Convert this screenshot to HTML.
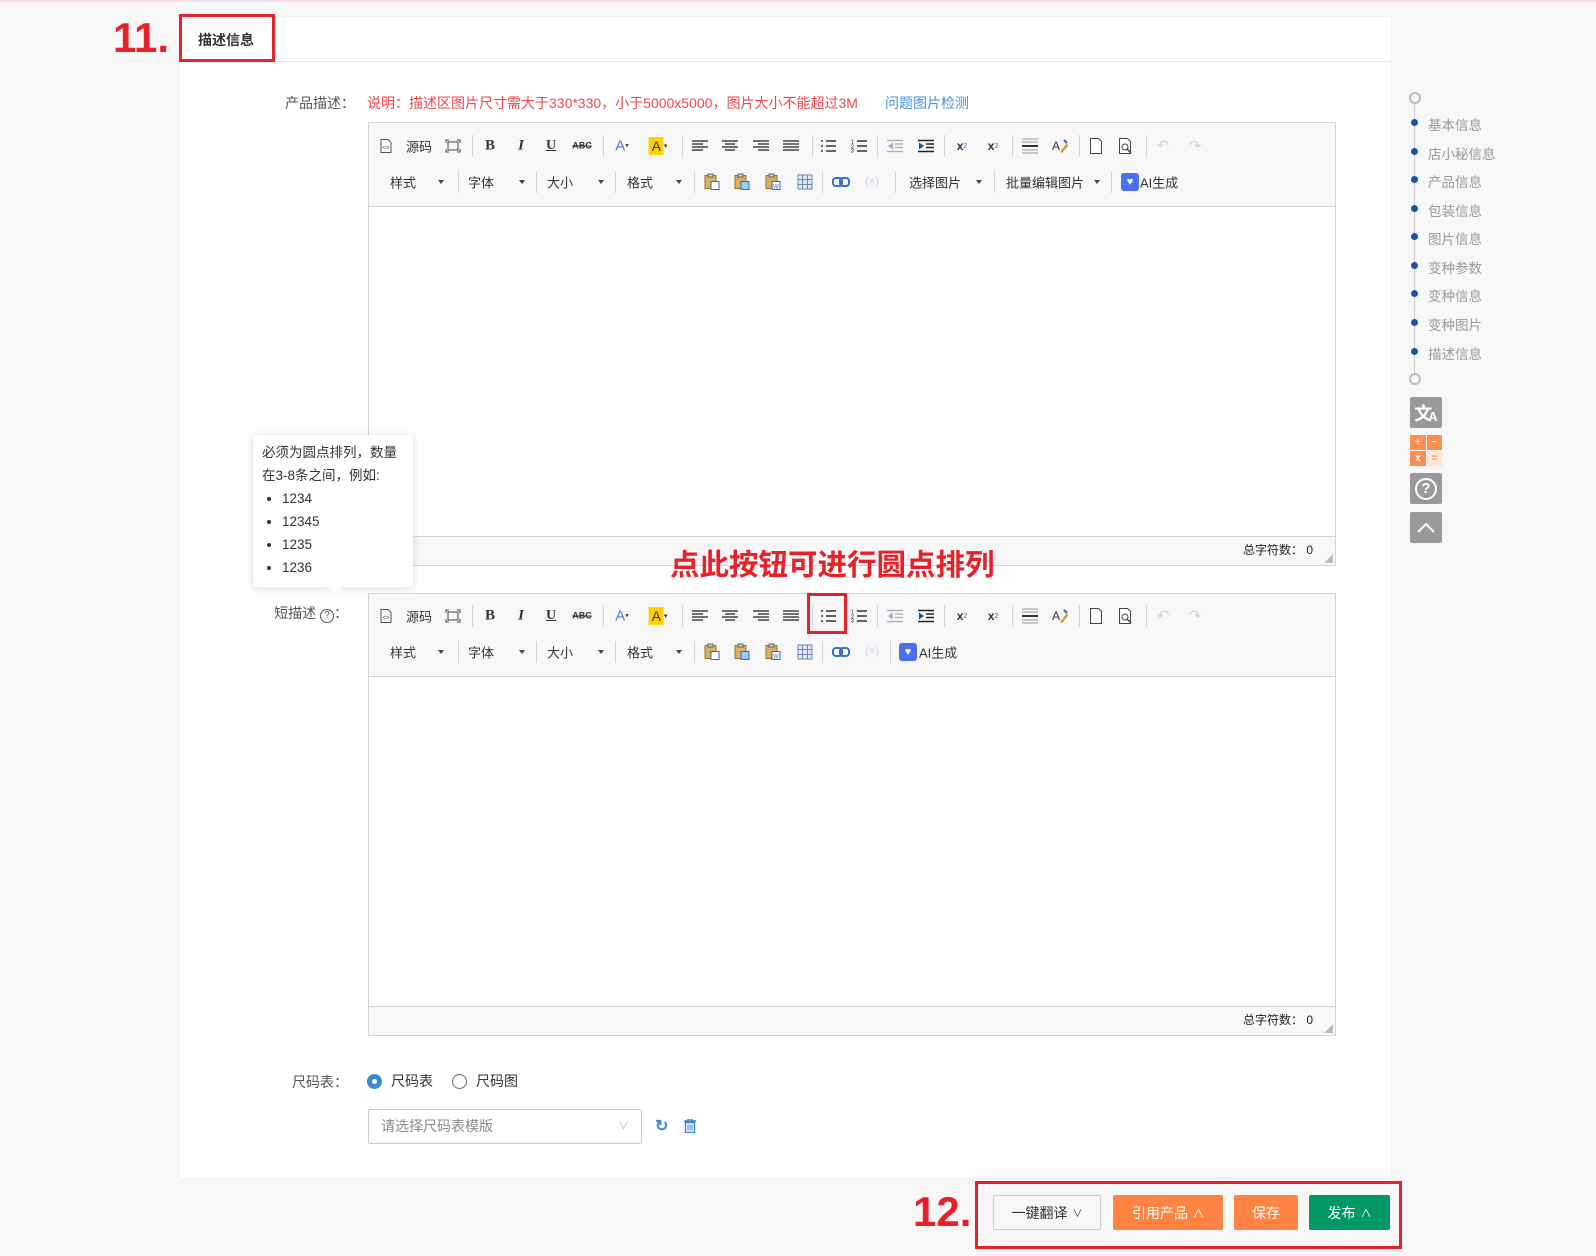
<!DOCTYPE html>
<html><head><meta charset="utf-8">
<style>
*{margin:0;padding:0;box-sizing:border-box}
body{width:1596px;height:1256px;background:#f7f7f7;font-family:"Liberation Sans","Noto Sans CJK SC",sans-serif;position:relative;overflow:hidden;color:#333;font-size:13px}
.a{position:absolute}
.topline{left:0;top:0;width:1596px;height:2px;background:#f3dce6}
.card{left:180px;top:17px;width:1211px;height:1161px;background:#fff;box-shadow:0 0 2px rgba(0,0,0,.05)}
.hdr{left:180px;top:61px;width:1211px;height:1px;background:#e6e6e6}
.redbox{border:3px solid #e8202a}
.big{color:#e8202a;font-weight:bold;font-family:"Liberation Sans",sans-serif}
.lbl{font-size:14px;color:#555;text-align:right;width:120px}
.ed{background:#fff;border:1px solid #d4d4d4}
.tb{left:0;top:0;right:0;background:#f7f7f7;border-bottom:1px solid #d4d4d4}
.ft{left:0;bottom:0;right:0;height:28px;background:#f7f7f7;border-top:1px solid #d4d4d4;font-size:12px;color:#222;text-align:right;padding-right:22px;line-height:27px}
.ft:after{content:"";position:absolute;right:2px;bottom:2px;border-left:9px solid transparent;border-bottom:9px solid #bbb}
.i{position:absolute;transform:translate(-50%,-50%);display:flex;align-items:center;justify-content:center;line-height:1}
.sep{position:absolute;width:1px;height:22px;background:#d0d0d0;transform:translateY(-50%)}
.t{position:absolute;transform:translateY(-50%);font-size:13px;color:#333;white-space:nowrap}
.car{position:absolute;transform:translate(-50%,-50%);width:0;height:0;border-left:3px solid transparent;border-right:3px solid transparent;border-top:4px solid #444}
.nav{left:1428px;font-size:13.5px;color:#999}
.dot{left:1411px;width:7px;height:7px;border-radius:50%;background:#1a56a0}
.sq{left:1410px;width:32px;height:31px;background:#999;border-radius:2px;display:flex;align-items:center;justify-content:center}
.btn{height:35px;border-radius:2px;font-size:14px;display:flex;align-items:center;justify-content:center;color:#fff}
</style></head><body>
<div class="a topline"></div>
<div class="a card"></div>
<div class="a hdr"></div>
<div class="a big" style="left:113px;top:14px;font-size:42px;line-height:48px">11.</div>
<div class="a redbox" style="left:179px;top:14px;width:96px;height:48px;background:#fff"></div>
<div class="a" style="left:198px;top:30px;font-size:14px;font-weight:bold;color:#333">描述信息</div>

<div class="a lbl" style="left:235px;top:93px">产品描述：</div>
<div class="a" style="left:367px;top:93px;font-size:14px;color:#f0464d">说明：描述区图片尺寸需大于330*330，小于5000x5000，图片大小不能超过3M</div>
<div class="a" style="left:885px;top:93px;font-size:14px;color:#4a8fd8">问题图片检测</div>

<!-- editor 1 -->
<div class="a ed" style="left:368px;top:122px;width:968px;height:444px">
 <div class="a tb" style="height:84px">
  <div class="i" style="left:17px;top:23px"><svg width="12" height="15"><path d="M1 1h7l3 3v10H1z" fill="none" stroke="#555"/><text x="2.5" y="11" font-size="6" fill="#555">&lt;&gt;</text></svg></div>
  <div class="t" style="left:37px;top:23px">源码</div>
  <div class="i" style="left:84px;top:23px"><svg width="16" height="14"><path d="M1 4V1h3M12 1h3v3M15 10v3h-3M4 13H1v-3M3 3h10v8H3z" fill="none" stroke="#444"/></svg></div>
  <div class="sep" style="left:103px;top:23px"></div>
  <div class="i" style="left:121px;top:23px;font-weight:bold;font-family:'Liberation Serif';font-size:15px">B</div>
  <div class="i" style="left:152px;top:23px;font-weight:bold;font-style:italic;font-family:'Liberation Serif';font-size:15px">I</div>
  <div class="i" style="left:182px;top:23px;font-weight:bold;text-decoration:underline;font-family:'Liberation Serif';font-size:14px">U</div>
  <div class="i" style="left:213px;top:23px;font-weight:bold;font-size:9px;text-decoration:line-through">ABC</div>
  <div class="sep" style="left:234px;top:23px"></div>
  <div class="i" style="left:253px;top:23px;color:#4a7de0;font-size:15px">A<span style="font-size:7px;color:#444">▾</span></div>
  <div class="i" style="left:289px;top:23px"><span style="background:#ffd000;padding:2px 3px;font-size:14px">A</span><span style="font-size:7px">▾</span></div>
  <div class="sep" style="left:313px;top:23px"></div>
  <div class="i" style="left:331px;top:23px"><svg width="16" height="12"><path d="M0 1h16M0 4h11M0 7h16M0 10h11" stroke="#444" stroke-width="1.5"/></svg></div>
  <div class="i" style="left:361px;top:23px"><svg width="16" height="12"><path d="M0 1h16M3 4h10M0 7h16M3 10h10" stroke="#444" stroke-width="1.5"/></svg></div>
  <div class="i" style="left:392px;top:23px"><svg width="16" height="12"><path d="M0 1h16M5 4h11M0 7h16M5 10h11" stroke="#444" stroke-width="1.5"/></svg></div>
  <div class="i" style="left:422px;top:23px"><svg width="16" height="12"><path d="M0 1h16M0 4h16M0 7h16M0 10h16" stroke="#444" stroke-width="1.5"/></svg></div>
  <div class="sep" style="left:443px;top:23px"></div>
  <div class="i" style="left:459px;top:23px"><svg width="16" height="13"><path d="M1 1.5h2M1 6.5h2M1 11.5h2M6 1.5h10M6 6.5h10M6 11.5h10" stroke="#333" stroke-width="1.5"/></svg></div>
  <div class="i" style="left:490px;top:23px"><svg width="16" height="13"><text x="0" y="4" font-size="5">1</text><text x="0" y="9" font-size="5">2</text><text x="0" y="13" font-size="5">3</text><path d="M6 1.5h10M6 6.5h10M6 11.5h10" stroke="#333" stroke-width="1.5"/></svg></div>
  <div class="sep" style="left:508px;top:23px"></div>
  <div class="i" style="left:526px;top:23px"><svg width="16" height="13"><path d="M0 1h16M8 4.5h8M8 8h8M0 12h16" stroke="#aaa" stroke-width="1.3"/><path d="M6 3v7L1 6.5z" fill="#aac"/></svg></div>
  <div class="i" style="left:557px;top:23px"><svg width="16" height="13"><path d="M0 1h16M8 4.5h8M8 8h8M0 12h16" stroke="#222" stroke-width="1.5"/><path d="M1 3v7l5-3.5z" fill="#1a4f9a"/></svg></div>
  <div class="sep" style="left:575px;top:23px"></div>
  <div class="i" style="left:593px;top:23px;font-weight:bold;font-size:12px">x<sub style="font-size:7px;color:#36c;font-weight:normal">2</sub></div>
  <div class="i" style="left:624px;top:23px;font-weight:bold;font-size:12px">x<sup style="font-size:7px;color:#36c;font-weight:normal">2</sup></div>
  <div class="sep" style="left:643px;top:23px"></div>
  <div class="i" style="left:661px;top:23px"><svg width="16" height="16"><path d="M0 1h16M0 4h16M0 12h16M0 15h16" stroke="#999"/><path d="M0 8h16" stroke="#333" stroke-width="2"/></svg></div>
  <div class="i" style="left:691px;top:23px"><svg width="16" height="16"><text x="0" y="12" font-size="12" fill="#333">A</text><path d="M8 14l7-9 1 3-6 7z" fill="#c9a030"/><path d="M12 2l3 3" stroke="#36c" stroke-width="2"/></svg></div>
  <div class="sep" style="left:710px;top:23px"></div>
  <div class="i" style="left:727px;top:23px"><svg width="12" height="16"><path d="M.5 .5h8l3 3v12H.5z" fill="#fff" stroke="#444"/></svg></div>
  <div class="i" style="left:757px;top:23px"><svg width="14" height="16"><path d="M.5 .5h8l3 3v12H.5z" fill="#fff" stroke="#444"/><circle cx="6" cy="9" r="3" fill="none" stroke="#444"/><path d="M8 11l4 4" stroke="#444" stroke-width="1.5"/></svg></div>
  <div class="sep" style="left:777px;top:23px"></div>
  <div class="i" style="left:794px;top:23px;color:#c7d5e8;font-size:15px">↶</div>
  <div class="i" style="left:826px;top:23px;color:#c7d5e8;font-size:15px">↷</div>

  <div class="t" style="left:21px;top:59px">样式</div><div class="car" style="left:72px;top:59px"></div>
  <div class="sep" style="left:89px;top:59px"></div>
  <div class="t" style="left:99px;top:59px">字体</div><div class="car" style="left:153px;top:59px"></div>
  <div class="sep" style="left:167px;top:59px"></div>
  <div class="t" style="left:178px;top:59px">大小</div><div class="car" style="left:232px;top:59px"></div>
  <div class="sep" style="left:246px;top:59px"></div>
  <div class="t" style="left:258px;top:59px">格式</div><div class="car" style="left:310px;top:59px"></div>
  <div class="sep" style="left:325px;top:59px"></div>
  <div class="i" style="left:343px;top:59px"><svg width="16" height="17"><rect x="1" y="2" width="11" height="13" fill="#d8b060" stroke="#987030"/><rect x="4" y="0.5" width="5" height="3" fill="#ccc" stroke="#666"/><rect x="7" y="8" width="8" height="8" fill="#fff" stroke="#36c"/></svg></div>
  <div class="i" style="left:373px;top:59px"><svg width="16" height="17"><rect x="1" y="2" width="11" height="13" fill="#d8b060" stroke="#987030"/><rect x="4" y="0.5" width="5" height="3" fill="#ccc" stroke="#666"/><rect x="7" y="8" width="8" height="8" fill="#9cf" stroke="#36c"/></svg></div>
  <div class="i" style="left:404px;top:59px"><svg width="16" height="17"><rect x="1" y="2" width="11" height="13" fill="#d8b060" stroke="#987030"/><rect x="4" y="0.5" width="5" height="3" fill="#ccc" stroke="#666"/><rect x="7" y="8" width="8" height="8" fill="#fff" stroke="#36c"/><text x="8" y="15" font-size="6" fill="#36c">W</text></svg></div>
  <div class="i" style="left:436px;top:59px"><svg width="15" height="15"><rect x=".5" y=".5" width="14" height="14" fill="#dde8f8" stroke="#6b86b0"/><path d="M0 5h15M0 10h15M5 0v15M10 0v15" stroke="#6b86b0"/></svg></div>
  <div class="sep" style="left:453px;top:59px"></div>
  <div class="i" style="left:472px;top:59px"><svg width="18" height="10"><rect x="1" y="1" width="9" height="8" rx="3" fill="none" stroke="#3a6fc8" stroke-width="2"/><rect x="8" y="1" width="9" height="8" rx="3" fill="none" stroke="#3a6fc8" stroke-width="2"/></svg></div>
  <div class="i" style="left:503px;top:59px;color:#c8d4e8;font-size:11px">(×)</div>
  <div class="sep" style="left:526px;top:59px"></div>
  <div class="t" style="left:540px;top:59px">选择图片</div><div class="car" style="left:610px;top:59px"></div>
  <div class="sep" style="left:625px;top:59px"></div>
  <div class="t" style="left:637px;top:59px">批量编辑图片</div><div class="car" style="left:728px;top:59px"></div>
  <div class="sep" style="left:742px;top:59px"></div>
  <div class="i" style="left:761px;top:59px;width:18px;height:18px;background:#4a6ff0;border-radius:3px;color:#fff;font-size:11px">♥</div>
  <div class="t" style="left:771px;top:59px">AI生成</div>
 </div>
 <div class="a ft" style="height:29px">总字符数： 0</div>
</div>

<div class="a big" style="left:670px;top:545px;font-size:29.5px;font-family:'Noto Sans CJK SC',sans-serif;line-height:36px">点此按钮可进行圆点排列</div>

<!-- tooltip -->
<div class="a" style="left:253px;top:435px;width:160px;height:152px;background:#fff;border-radius:3px;box-shadow:0 1px 8px rgba(0,0,0,.15);font-size:13.5px;color:#333;padding:6px 9px;line-height:23px">
必须为圆点排列，数量在3-8条之间，例如:
<ul style="padding-left:20px"><li>1234</li><li>12345</li><li>1235</li><li>1236</li></ul>
</div>
<div class="a" style="left:327px;top:587px;width:0;height:0;border-left:7px solid transparent;border-right:7px solid transparent;border-top:7px solid #fff"></div>

<div class="a lbl" style="left:228px;top:603px">短描述 <span style="display:inline-block;width:14px;height:14px;border:1px solid #555;border-radius:50%;font-size:10px;line-height:12px;text-align:center">?</span>：</div>

<!-- editor 2 -->
<div class="a ed" style="left:368px;top:593px;width:968px;height:443px">
 <div class="a tb" style="height:83px">
  <div class="i" style="left:17px;top:22px"><svg width="12" height="15"><path d="M1 1h7l3 3v10H1z" fill="none" stroke="#555"/><text x="2.5" y="11" font-size="6" fill="#555">&lt;&gt;</text></svg></div>
  <div class="t" style="left:37px;top:22px">源码</div>
  <div class="i" style="left:84px;top:22px"><svg width="16" height="14"><path d="M1 4V1h3M12 1h3v3M15 10v3h-3M4 13H1v-3M3 3h10v8H3z" fill="none" stroke="#444"/></svg></div>
  <div class="sep" style="left:103px;top:22px"></div>
  <div class="i" style="left:121px;top:22px;font-weight:bold;font-family:'Liberation Serif';font-size:15px">B</div>
  <div class="i" style="left:152px;top:22px;font-weight:bold;font-style:italic;font-family:'Liberation Serif';font-size:15px">I</div>
  <div class="i" style="left:182px;top:22px;font-weight:bold;text-decoration:underline;font-family:'Liberation Serif';font-size:14px">U</div>
  <div class="i" style="left:213px;top:22px;font-weight:bold;font-size:9px;text-decoration:line-through">ABC</div>
  <div class="sep" style="left:234px;top:22px"></div>
  <div class="i" style="left:253px;top:22px;color:#4a7de0;font-size:15px">A<span style="font-size:7px;color:#444">▾</span></div>
  <div class="i" style="left:289px;top:22px"><span style="background:#ffd000;padding:2px 3px;font-size:14px">A</span><span style="font-size:7px">▾</span></div>
  <div class="sep" style="left:313px;top:22px"></div>
  <div class="i" style="left:331px;top:22px"><svg width="16" height="12"><path d="M0 1h16M0 4h11M0 7h16M0 10h11" stroke="#444" stroke-width="1.5"/></svg></div>
  <div class="i" style="left:361px;top:22px"><svg width="16" height="12"><path d="M0 1h16M3 4h10M0 7h16M3 10h10" stroke="#444" stroke-width="1.5"/></svg></div>
  <div class="i" style="left:392px;top:22px"><svg width="16" height="12"><path d="M0 1h16M5 4h11M0 7h16M5 10h11" stroke="#444" stroke-width="1.5"/></svg></div>
  <div class="i" style="left:422px;top:22px"><svg width="16" height="12"><path d="M0 1h16M0 4h16M0 7h16M0 10h16" stroke="#444" stroke-width="1.5"/></svg></div>
  <div class="sep" style="left:443px;top:22px"></div>
  <div class="i" style="left:459px;top:22px"><svg width="16" height="13"><path d="M1 1.5h2M1 6.5h2M1 11.5h2M6 1.5h10M6 6.5h10M6 11.5h10" stroke="#333" stroke-width="1.5"/></svg></div>
  <div class="i" style="left:490px;top:22px"><svg width="16" height="13"><text x="0" y="4" font-size="5">1</text><text x="0" y="9" font-size="5">2</text><text x="0" y="13" font-size="5">3</text><path d="M6 1.5h10M6 6.5h10M6 11.5h10" stroke="#333" stroke-width="1.5"/></svg></div>
  <div class="sep" style="left:508px;top:22px"></div>
  <div class="i" style="left:526px;top:22px"><svg width="16" height="13"><path d="M0 1h16M8 4.5h8M8 8h8M0 12h16" stroke="#aaa" stroke-width="1.3"/><path d="M6 3v7L1 6.5z" fill="#aac"/></svg></div>
  <div class="i" style="left:557px;top:22px"><svg width="16" height="13"><path d="M0 1h16M8 4.5h8M8 8h8M0 12h16" stroke="#222" stroke-width="1.5"/><path d="M1 3v7l5-3.5z" fill="#1a4f9a"/></svg></div>
  <div class="sep" style="left:575px;top:22px"></div>
  <div class="i" style="left:593px;top:22px;font-weight:bold;font-size:12px">x<sub style="font-size:7px;color:#36c;font-weight:normal">2</sub></div>
  <div class="i" style="left:624px;top:22px;font-weight:bold;font-size:12px">x<sup style="font-size:7px;color:#36c;font-weight:normal">2</sup></div>
  <div class="sep" style="left:643px;top:22px"></div>
  <div class="i" style="left:661px;top:22px"><svg width="16" height="16"><path d="M0 1h16M0 4h16M0 12h16M0 15h16" stroke="#999"/><path d="M0 8h16" stroke="#333" stroke-width="2"/></svg></div>
  <div class="i" style="left:691px;top:22px"><svg width="16" height="16"><text x="0" y="12" font-size="12" fill="#333">A</text><path d="M8 14l7-9 1 3-6 7z" fill="#c9a030"/><path d="M12 2l3 3" stroke="#36c" stroke-width="2"/></svg></div>
  <div class="sep" style="left:710px;top:22px"></div>
  <div class="i" style="left:727px;top:22px"><svg width="12" height="16"><path d="M.5 .5h8l3 3v12H.5z" fill="#fff" stroke="#444"/></svg></div>
  <div class="i" style="left:757px;top:22px"><svg width="14" height="16"><path d="M.5 .5h8l3 3v12H.5z" fill="#fff" stroke="#444"/><circle cx="6" cy="9" r="3" fill="none" stroke="#444"/><path d="M8 11l4 4" stroke="#444" stroke-width="1.5"/></svg></div>
  <div class="sep" style="left:777px;top:22px"></div>
  <div class="i" style="left:794px;top:22px;color:#c7d5e8;font-size:15px">↶</div>
  <div class="i" style="left:826px;top:22px;color:#c7d5e8;font-size:15px">↷</div>

  <div class="t" style="left:21px;top:58px">样式</div><div class="car" style="left:72px;top:58px"></div>
  <div class="sep" style="left:89px;top:58px"></div>
  <div class="t" style="left:99px;top:58px">字体</div><div class="car" style="left:153px;top:58px"></div>
  <div class="sep" style="left:167px;top:58px"></div>
  <div class="t" style="left:178px;top:58px">大小</div><div class="car" style="left:232px;top:58px"></div>
  <div class="sep" style="left:246px;top:58px"></div>
  <div class="t" style="left:258px;top:58px">格式</div><div class="car" style="left:310px;top:58px"></div>
  <div class="sep" style="left:325px;top:58px"></div>
  <div class="i" style="left:343px;top:58px"><svg width="16" height="17"><rect x="1" y="2" width="11" height="13" fill="#d8b060" stroke="#987030"/><rect x="4" y="0.5" width="5" height="3" fill="#ccc" stroke="#666"/><rect x="7" y="8" width="8" height="8" fill="#fff" stroke="#36c"/></svg></div>
  <div class="i" style="left:373px;top:58px"><svg width="16" height="17"><rect x="1" y="2" width="11" height="13" fill="#d8b060" stroke="#987030"/><rect x="4" y="0.5" width="5" height="3" fill="#ccc" stroke="#666"/><rect x="7" y="8" width="8" height="8" fill="#9cf" stroke="#36c"/></svg></div>
  <div class="i" style="left:404px;top:58px"><svg width="16" height="17"><rect x="1" y="2" width="11" height="13" fill="#d8b060" stroke="#987030"/><rect x="4" y="0.5" width="5" height="3" fill="#ccc" stroke="#666"/><rect x="7" y="8" width="8" height="8" fill="#fff" stroke="#36c"/><text x="8" y="15" font-size="6" fill="#36c">W</text></svg></div>
  <div class="i" style="left:436px;top:58px"><svg width="15" height="15"><rect x=".5" y=".5" width="14" height="14" fill="#dde8f8" stroke="#6b86b0"/><path d="M0 5h15M0 10h15M5 0v15M10 0v15" stroke="#6b86b0"/></svg></div>
  <div class="sep" style="left:453px;top:58px"></div>
  <div class="i" style="left:472px;top:58px"><svg width="18" height="10"><rect x="1" y="1" width="9" height="8" rx="3" fill="none" stroke="#3a6fc8" stroke-width="2"/><rect x="8" y="1" width="9" height="8" rx="3" fill="none" stroke="#3a6fc8" stroke-width="2"/></svg></div>
  <div class="i" style="left:503px;top:58px;color:#c8d4e8;font-size:11px">(×)</div>
  <div class="sep" style="left:521px;top:58px"></div>
  <div class="i" style="left:539px;top:58px;width:18px;height:18px;background:#4a6ff0;border-radius:3px;color:#fff;font-size:11px">♥</div>
  <div class="t" style="left:550px;top:58px">AI生成</div>
 </div>
 <div class="a ft" style="height:29px">总字符数： 0</div>
</div>
<div class="a redbox" style="left:807px;top:593px;width:40px;height:41px"></div>

<!-- size chart -->
<div class="a lbl" style="left:228px;top:1072px">尺码表：</div>
<div class="a" style="left:367px;top:1074px;width:15px;height:15px;border-radius:50%;background:#3a87d6;display:flex;align-items:center;justify-content:center"><div style="width:5px;height:5px;border-radius:50%;background:#fff"></div></div>
<div class="a" style="left:391px;top:1071px;font-size:14px">尺码表</div>
<div class="a" style="left:452px;top:1074px;width:15px;height:15px;border-radius:50%;border:1px solid #666;background:#fff"></div>
<div class="a" style="left:476px;top:1071px;font-size:14px">尺码图</div>
<div class="a" style="left:368px;top:1109px;width:274px;height:35px;border:1px solid #ccc;border-radius:2px;background:#fff;font-size:14px;color:#888;padding-left:12px;line-height:33px">请选择尺码表模版<span style="position:absolute;right:12px;color:#bbb;font-size:11px">∨</span></div>
<div class="a" style="left:655px;top:1116px;color:#3a87d6;font-size:16px;font-weight:bold">↻</div>
<svg class="a" style="left:684px;top:1119px" width="12" height="14"><path d="M0 2h12M4 2V0h4v2M1.5 3.5h9V13.5h-9z" fill="none" stroke="#3a87d6" stroke-width="1.4"/><path d="M4 5.5v6M6 5.5v6M8 5.5v6" stroke="#3a87d6"/></svg>

<!-- right nav -->
<div class="a" style="left:1414px;top:98px;width:1px;height:280px;background:#ccc"></div>
<div class="a" style="left:1409px;top:92px;width:12px;height:12px;border:2px solid #bbb;border-radius:50%;background:#f7f7f7"></div>
<div class="a" style="left:1409px;top:373px;width:12px;height:12px;border:2px solid #bbb;border-radius:50%;background:#f7f7f7"></div>
<div class="a dot" style="top:119px"></div><div class="a nav" style="top:114px">基本信息</div>
<div class="a dot" style="top:148px"></div><div class="a nav" style="top:143px">店小秘信息</div>
<div class="a dot" style="top:176px"></div><div class="a nav" style="top:171px">产品信息</div>
<div class="a dot" style="top:205px"></div><div class="a nav" style="top:200px">包装信息</div>
<div class="a dot" style="top:233px"></div><div class="a nav" style="top:228px">图片信息</div>
<div class="a dot" style="top:262px"></div><div class="a nav" style="top:257px">变种参数</div>
<div class="a dot" style="top:290px"></div><div class="a nav" style="top:285px">变种信息</div>
<div class="a dot" style="top:319px"></div><div class="a nav" style="top:314px">变种图片</div>
<div class="a dot" style="top:348px"></div><div class="a nav" style="top:343px">描述信息</div>
<div class="a sq" style="top:397px;color:#fff;font-size:18px;font-weight:bold">文<span style="font-size:13px;margin-top:8px;margin-left:-4px">A</span></div>
<div class="a" style="left:1410px;top:435px;width:32px;height:31px;display:grid;grid-template-columns:1fr 1fr;gap:1px;font-size:10px;color:#fff;font-weight:bold;text-align:center;line-height:15px">
<div style="background:#ff8c50">+</div><div style="background:#ff8c50">−</div><div style="background:#ff8c50">x</div><div style="background:#fde6d8;color:#ff8c50">=</div></div>
<div class="a sq" style="top:473px"><div style="width:22px;height:22px;border:2px solid #fff;border-radius:50%;color:#fff;font-weight:bold;font-size:15px;text-align:center;line-height:18px">?</div></div>
<div class="a sq" style="top:512px"><svg width="18" height="10"><path d="M1 9l8-8 8 8" fill="none" stroke="#fff" stroke-width="2"/></svg></div>

<!-- bottom bar -->
<div class="a big" style="left:913px;top:1188px;font-size:42px;line-height:48px">12.</div>
<div class="a redbox" style="left:975px;top:1181px;width:427px;height:68px"></div>
<div class="a btn" style="left:993px;top:1195px;width:108px;border:1px solid #ccc;background:#f7f7f7;color:#333">一键翻译 <span style="font-size:10px;margin-left:5px">∨</span></div>
<div class="a btn" style="left:1113px;top:1195px;width:110px;background:#ff8443">引用产品 <span style="font-size:11px;margin-left:5px">∧</span></div>
<div class="a btn" style="left:1234px;top:1195px;width:64px;background:#ff8443">保存</div>
<div class="a btn" style="left:1309px;top:1195px;width:81px;background:#009966">发布 <span style="font-size:11px;margin-left:5px">∧</span></div>
</body></html>
